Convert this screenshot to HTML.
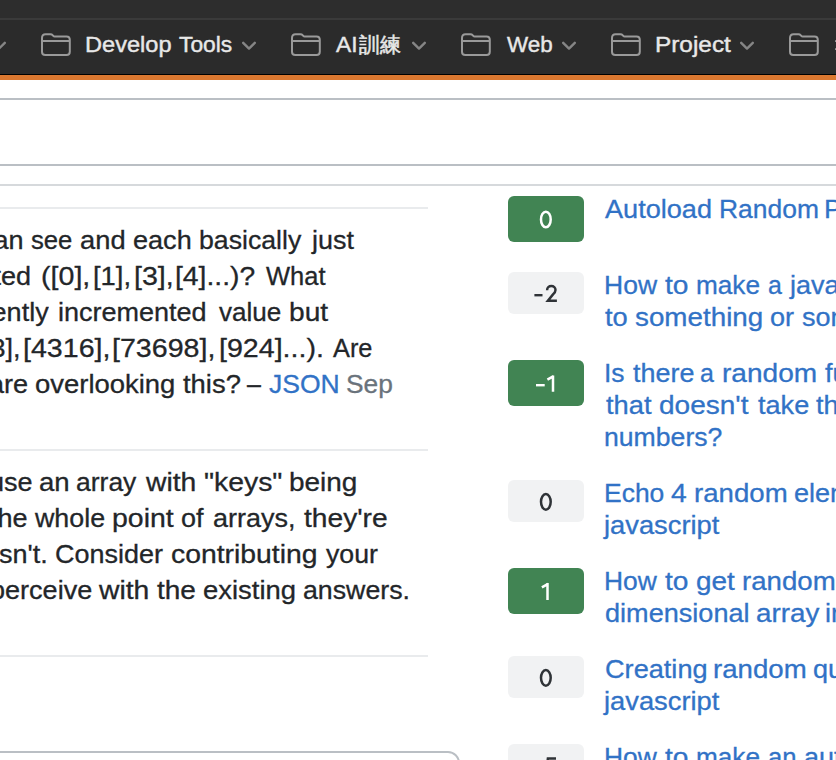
<!DOCTYPE html>
<html><head><meta charset="utf-8">
<style>
html,body{margin:0;padding:0;}
body{width:836px;height:760px;overflow:hidden;position:relative;background:#fff;font-family:"Liberation Sans",sans-serif;}
.a{position:absolute;}
.bar{left:0;top:0;width:836px;height:74px;background:#2b2b2b;}
.bar .tp{left:0;top:0;width:836px;height:18px;background:#2d2d2d;}
.bar .ln{left:0;top:18px;width:836px;height:2px;background:#3a3a3a;}
.blk{left:0;top:74px;width:836px;height:1px;background:#000;}
.org{left:0;top:75px;width:836px;height:5px;background:#db7830;}
.bw{position:absolute;color:#e8e8e8;font-size:22px;line-height:26px;white-space:nowrap;transform-origin:0 0;-webkit-text-stroke:0.4px #e8e8e8;}
.cjk{position:absolute;color:#e8e8e8;font-size:21px;line-height:26px;white-space:nowrap;-webkit-text-stroke:0.5px #e8e8e8;}
.fold{top:32px;}
.chev{top:40px;}
.hr{left:0;width:836px;height:2px;background:#babfc4;}
.ct{color:#232629;font-size:26px;line-height:36px;white-space:nowrap;left:0;}
.sep{left:0;width:428px;height:2px;background:#e9ebed;}
.badge{left:508px;width:76px;border-radius:6px;font-size:24px;text-align:center;}
.g{background:#418453;color:#fff;height:46px;line-height:48px;}
.y{background:#f1f2f3;color:#3b4045;height:42px;line-height:44px;}
.w{position:absolute;font-size:26px;line-height:36px;white-space:nowrap;transform-origin:0 0;-webkit-text-stroke:0.3px currentColor;}
.lk{left:605px;color:#3172c6;font-size:26px;line-height:32px;white-space:nowrap;}
</style></head><body>
<div class="a bar"><div class="a tp"></div><div class="a ln"></div></div>
<div class="a blk"></div>
<div class="a org"></div>

<!-- chevrons -->
<svg class="a chev" style="left:-8px" width="16" height="12"><path d="M1.2 2.8 L7 8.6 L12.8 2.8" fill="none" stroke="#858585" stroke-width="2.4" stroke-linecap="round" stroke-linejoin="round"/></svg>
<svg class="a chev" style="left:242px" width="16" height="12"><path d="M1.2 2.8 L7 8.6 L12.8 2.8" fill="none" stroke="#858585" stroke-width="2.4" stroke-linecap="round" stroke-linejoin="round"/></svg>
<svg class="a chev" style="left:412px" width="16" height="12"><path d="M1.2 2.8 L7 8.6 L12.8 2.8" fill="none" stroke="#858585" stroke-width="2.4" stroke-linecap="round" stroke-linejoin="round"/></svg>
<svg class="a chev" style="left:562px" width="16" height="12"><path d="M1.2 2.8 L7 8.6 L12.8 2.8" fill="none" stroke="#858585" stroke-width="2.4" stroke-linecap="round" stroke-linejoin="round"/></svg>
<svg class="a chev" style="left:740px" width="16" height="12"><path d="M1.2 2.8 L7 8.6 L12.8 2.8" fill="none" stroke="#858585" stroke-width="2.4" stroke-linecap="round" stroke-linejoin="round"/></svg>

<svg class="a fold" style="left:41px" width="31" height="26" viewBox="0 0 31 26"><path d="M1 6 Q1 2.2 4.5 2.2 H9.5 Q10.8 2.2 11.6 3.2 L12.4 4 Q12.8 4.5 13.6 4.5 H25.5 Q28.8 4.5 28.8 7.8 V19.7 Q28.8 23 25.5 23 H4.3 Q1 23 1 19.7 Z M1 9 H28.8" fill="none" stroke="#9a9a9a" stroke-width="2"/></svg>

<svg class="a fold" style="left:291px" width="31" height="26" viewBox="0 0 31 26"><path d="M1 6 Q1 2.2 4.5 2.2 H9.5 Q10.8 2.2 11.6 3.2 L12.4 4 Q12.8 4.5 13.6 4.5 H25.5 Q28.8 4.5 28.8 7.8 V19.7 Q28.8 23 25.5 23 H4.3 Q1 23 1 19.7 Z M1 9 H28.8" fill="none" stroke="#9a9a9a" stroke-width="2"/></svg>

<svg class="a fold" style="left:461px" width="31" height="26" viewBox="0 0 31 26"><path d="M1 6 Q1 2.2 4.5 2.2 H9.5 Q10.8 2.2 11.6 3.2 L12.4 4 Q12.8 4.5 13.6 4.5 H25.5 Q28.8 4.5 28.8 7.8 V19.7 Q28.8 23 25.5 23 H4.3 Q1 23 1 19.7 Z M1 9 H28.8" fill="none" stroke="#9a9a9a" stroke-width="2"/></svg>

<svg class="a fold" style="left:611px" width="31" height="26" viewBox="0 0 31 26"><path d="M1 6 Q1 2.2 4.5 2.2 H9.5 Q10.8 2.2 11.6 3.2 L12.4 4 Q12.8 4.5 13.6 4.5 H25.5 Q28.8 4.5 28.8 7.8 V19.7 Q28.8 23 25.5 23 H4.3 Q1 23 1 19.7 Z M1 9 H28.8" fill="none" stroke="#9a9a9a" stroke-width="2"/></svg>

<svg class="a fold" style="left:789px" width="31" height="26" viewBox="0 0 31 26"><path d="M1 6 Q1 2.2 4.5 2.2 H9.5 Q10.8 2.2 11.6 3.2 L12.4 4 Q12.8 4.5 13.6 4.5 H25.5 Q28.8 4.5 28.8 7.8 V19.7 Q28.8 23 25.5 23 H4.3 Q1 23 1 19.7 Z M1 9 H28.8" fill="none" stroke="#9a9a9a" stroke-width="2"/></svg>

<div class="a" style="left:834.6px;top:40px;width:1.4px;height:2.2px;background:#9a9a9a;border-radius:1px"></div>
<div class="a" style="left:834.6px;top:47.8px;width:1.4px;height:2.2px;background:#9a9a9a;border-radius:1px"></div>
<!-- page -->
<div class="a hr" style="top:98px"></div>
<div class="a hr" style="top:164px"></div>
<div class="a hr" style="top:184px;background:#d6d9dc"></div>
<div class="a sep" style="top:207px"></div>


<div class="a sep" style="top:449px"></div>


<div class="a sep" style="top:655px"></div>

<div class="a" style="left:-20px;top:751px;width:476px;height:40px;border:2px solid #babfc4;border-radius:12px;"></div>

<!-- sidebar -->
<div class="a badge g" style="top:196px"><svg width="76" height="46" viewBox="0 0 76 46" style="position:absolute;left:0;top:0"><g fill="none" stroke="#fff" stroke-width="2.5"><ellipse cx="37.85" cy="23.45" rx="4.85" ry="7.8"/></g></svg></div>
<div class="a badge y" style="top:272px"><svg width="76" height="42" viewBox="0 0 76 42" style="position:absolute;left:0;top:0"><g fill="none" stroke="#2f3337" stroke-width="2.5"><rect x="26.4" y="22.0" width="8.1" height="2.4" fill="#2f3337" stroke="none"/><path d="M39.1 18.2 C39.1 15.6 41 14.1 43.3 14.1 C45.7 14.1 47.5 15.7 47.5 17.9 C47.5 19.6 46.6 20.8 45 22.4 L39.9 28.75 H48.9"/></g></svg></div>
<div class="a badge g" style="top:360px"><svg width="76" height="46" viewBox="0 0 76 46" style="position:absolute;left:0;top:0"><g fill="none" stroke="#fff" stroke-width="2.5"><rect x="28" y="24.0" width="8.7" height="2.4" fill="#fff" stroke="none"/><path d="M45 31.8 V15.4 M45.6 16.1 L39.4 19.7"/></g></svg></div>
<div class="a badge y" style="top:480px"><svg width="76" height="42" viewBox="0 0 76 42" style="position:absolute;left:0;top:0"><g fill="none" stroke="#2f3337" stroke-width="2.5"><ellipse cx="37.85" cy="21.85" rx="4.85" ry="7.8"/></g></svg></div>
<div class="a badge g" style="top:568px"><svg width="76" height="46" viewBox="0 0 76 46" style="position:absolute;left:0;top:0"><g fill="none" stroke="#fff" stroke-width="2.5"><path d="M39.5 32.1 V15.100000000000001 M40.1 15.8 L33.9 19.4"/></g></svg></div>
<div class="a badge y" style="top:656px"><svg width="76" height="42" viewBox="0 0 76 42" style="position:absolute;left:0;top:0"><g fill="none" stroke="#2f3337" stroke-width="2.5"><ellipse cx="37.85" cy="21.85" rx="4.85" ry="7.8"/></g></svg></div>
<div class="a badge y" style="top:744px"><svg width="76" height="42" viewBox="0 0 76 42" style="position:absolute;left:0;top:0"><g fill="none" stroke="#2f3337" stroke-width="2.5"><rect x="26.4" y="22.0" width="8.1" height="2.4" fill="#2f3337" stroke="none"/><path d="M48 14.5 H39.9 L39.1 22 C40.1 21 41.4 20.5 43 20.5 C45.8 20.5 47.9 22.6 47.9 25.3 C47.9 28.2 45.8 30.2 43 30.2 C40.8 30.2 39.1 29 38.6 27.2"/></g></svg></div>
<div class="cjk" style="left:359px;top:31.5px">訓練</div>
<div class="bw" style="left:85.16px;top:32.38px;transform:scaleX(1.0718)">Develop</div>
<div class="bw" style="left:178.90px;top:32.38px;transform:scaleX(1.0373)">Tools</div>
<div class="bw" style="left:336.00px;top:32.38px;transform:scaleX(1.0368)">AI</div>
<div class="bw" style="left:507.20px;top:32.38px;transform:scaleX(1.0182)">Web</div>
<div class="bw" style="left:654.98px;top:32.38px;transform:scaleX(1.1076)">Project</div>
<div class="w" style="left:-19.60px;top:221.69px;transform:scaleX(1.0400);color:#232629">can</div>
<div class="w" style="left:31.31px;top:221.69px;transform:scaleX(0.9875);color:#232629">see</div>
<div class="w" style="left:80.25px;top:221.69px;transform:scaleX(1.0512);color:#232629">and</div>
<div class="w" style="left:132.96px;top:221.69px;transform:scaleX(1.0407);color:#232629">each</div>
<div class="w" style="left:199.15px;top:221.69px;transform:scaleX(1.0255);color:#232629">basically</div>
<div class="w" style="left:311.54px;top:221.69px;transform:scaleX(1.0366);color:#232629">just</div>
<div class="w" style="left:-44.24px;top:257.69px;transform:scaleX(1.0400);color:#232629">sorted</div>
<div class="w" style="left:40.80px;top:257.69px;transform:scaleX(1.1000);color:#232629">([0],</div>
<div class="w" style="left:93.19px;top:257.69px;transform:scaleX(1.0531);color:#232629">[1],</div>
<div class="w" style="left:133.95px;top:257.69px;transform:scaleX(1.1000);color:#232629">[3],</div>
<div class="w" style="left:175.43px;top:257.69px;transform:scaleX(1.0873);color:#232629">[4]...)?</div>
<div class="w" style="left:265.80px;top:257.69px;transform:scaleX(0.9803);color:#232629">What</div>
<div class="w" style="left:-55.00px;top:293.69px;transform:scaleX(1.0400);color:#232629">currently</div>
<div class="w" style="left:57.72px;top:293.69px;transform:scaleX(1.0388);color:#232629">incremented</div>
<div class="w" style="left:218.80px;top:293.69px;transform:scaleX(1.0033);color:#232629">value</div>
<div class="w" style="left:289.14px;top:293.69px;transform:scaleX(1.0824);color:#232629">but</div>
<div class="w" style="left:-17.36px;top:329.69px;transform:scaleX(1.0400);color:#232629">[3],</div>
<div class="w" style="left:22.75px;top:329.69px;transform:scaleX(1.1000);color:#232629">[4316],</div>
<div class="w" style="left:111.75px;top:329.69px;transform:scaleX(1.1000);color:#232629">[73698],</div>
<div class="w" style="left:218.90px;top:329.69px;transform:scaleX(1.1000);color:#232629">[924]...).</div>
<div class="w" style="left:333.30px;top:329.69px;transform:scaleX(0.9750);color:#232629">Are</div>
<div class="w" style="left:-11.48px;top:365.69px;transform:scaleX(1.0400);color:#232629">are</div>
<div class="w" style="left:35.34px;top:365.69px;transform:scaleX(1.0554);color:#232629">overlooking</div>
<div class="w" style="left:183.40px;top:365.69px;transform:scaleX(1.0537);color:#232629">this?</div>
<div class="w" style="left:247.40px;top:365.69px;transform:scaleX(0.9600);color:#232629">–</div>
<div class="w" style="left:269.38px;top:365.69px;transform:scaleX(1.0197);color:#3172c6">JSON</div>
<div class="w" style="left:345.99px;top:365.69px;transform:scaleX(1.0114);color:#6a737c">Sep</div>
<div class="w" style="left:-11.24px;top:464.49px;transform:scaleX(1.0400);color:#232629">use</div>
<div class="w" style="left:39.14px;top:464.49px;transform:scaleX(1.0615);color:#232629">an</div>
<div class="w" style="left:75.58px;top:464.49px;transform:scaleX(1.0190);color:#232629">array</div>
<div class="w" style="left:145.70px;top:464.49px;transform:scaleX(1.0889);color:#232629">with</div>
<div class="w" style="left:204.21px;top:464.49px;transform:scaleX(1.0900);color:#232629">"keys"</div>
<div class="w" style="left:288.65px;top:464.49px;transform:scaleX(1.0750);color:#232629">being</div>
<div class="w" style="left:-10.00px;top:500.49px;transform:scaleX(1.0400);color:#232629">the</div>
<div class="w" style="left:35.20px;top:500.49px;transform:scaleX(1.0313);color:#232629">whole</div>
<div class="w" style="left:112.11px;top:500.49px;transform:scaleX(1.0944);color:#232629">point</div>
<div class="w" style="left:181.16px;top:500.49px;transform:scaleX(1.0381);color:#232629">of</div>
<div class="w" style="left:213.46px;top:500.49px;transform:scaleX(1.0382);color:#232629">arrays,</div>
<div class="w" style="left:304.00px;top:500.49px;transform:scaleX(1.0829);color:#232629">they're</div>
<div class="w" style="left:-6.54px;top:536.49px;transform:scaleX(1.0400);color:#232629">isn't.</div>
<div class="w" style="left:55.46px;top:536.49px;transform:scaleX(1.0369);color:#232629">Consider</div>
<div class="w" style="left:170.91px;top:536.49px;transform:scaleX(1.0894);color:#232629">contributing</div>
<div class="w" style="left:326.30px;top:536.49px;transform:scaleX(1.0260);color:#232629">your</div>
<div class="w" style="left:-10.38px;top:572.49px;transform:scaleX(1.0400);color:#232629">perceive</div>
<div class="w" style="left:99.20px;top:572.49px;transform:scaleX(1.0889);color:#232629">with</div>
<div class="w" style="left:157.00px;top:572.49px;transform:scaleX(1.0771);color:#232629">the</div>
<div class="w" style="left:202.95px;top:572.49px;transform:scaleX(1.0547);color:#232629">existing</div>
<div class="w" style="left:302.97px;top:572.49px;transform:scaleX(1.0287);color:#232629">answers.</div>
<div class="w" style="left:604.80px;top:190.99px;transform:scaleX(1.0426);color:#3172c6">Autoload</div>
<div class="w" style="left:718.77px;top:190.99px;transform:scaleX(1.0168);color:#3172c6">Random</div>
<div class="w" style="left:823.82px;top:190.99px;transform:scaleX(1.0400);color:#3172c6">Posts</div>
<div class="w" style="left:603.66px;top:266.99px;transform:scaleX(1.0200);color:#3172c6">How</div>
<div class="w" style="left:664.90px;top:266.99px;transform:scaleX(1.0810);color:#3172c6">to</div>
<div class="w" style="left:695.59px;top:266.99px;transform:scaleX(1.0066);color:#3172c6">make</div>
<div class="w" style="left:767.52px;top:266.99px;transform:scaleX(0.9600);color:#3172c6">a</div>
<div class="w" style="left:790.04px;top:266.99px;transform:scaleX(1.0400);color:#3172c6">javascript</div>
<div class="w" style="left:605.30px;top:298.99px;transform:scaleX(1.0476);color:#3172c6">to</div>
<div class="w" style="left:634.83px;top:298.99px;transform:scaleX(1.0692);color:#3172c6">something</div>
<div class="w" style="left:770.26px;top:298.99px;transform:scaleX(1.0409);color:#3172c6">or</div>
<div class="w" style="left:801.66px;top:298.99px;transform:scaleX(1.0400);color:#3172c6">some</div>
<div class="w" style="left:603.86px;top:354.99px;transform:scaleX(1.0176);color:#3172c6">Is</div>
<div class="w" style="left:632.50px;top:354.99px;transform:scaleX(1.0362);color:#3172c6">there</div>
<div class="w" style="left:700.27px;top:354.99px;transform:scaleX(0.9600);color:#3172c6">a</div>
<div class="w" style="left:722.04px;top:354.99px;transform:scaleX(1.0800);color:#3172c6">random</div>
<div class="w" style="left:824.50px;top:354.99px;transform:scaleX(1.0400);color:#3172c6">function</div>
<div class="w" style="left:605.70px;top:386.99px;transform:scaleX(1.0488);color:#3172c6">that</div>
<div class="w" style="left:658.82px;top:386.99px;transform:scaleX(1.0768);color:#3172c6">doesn't</div>
<div class="w" style="left:757.50px;top:386.99px;transform:scaleX(1.0417);color:#3172c6">take</div>
<div class="w" style="left:816.00px;top:386.99px;transform:scaleX(1.0400);color:#3172c6">the</div>
<div class="w" style="left:603.65px;top:418.99px;transform:scaleX(1.0239);color:#3172c6">numbers?</div>
<div class="w" style="left:603.66px;top:474.99px;transform:scaleX(1.0179);color:#3172c6">Echo</div>
<div class="w" style="left:670.92px;top:474.99px;transform:scaleX(1.0846);color:#3172c6">4</div>
<div class="w" style="left:693.88px;top:474.99px;transform:scaleX(1.0624);color:#3172c6">random</div>
<div class="w" style="left:793.76px;top:474.99px;transform:scaleX(1.0400);color:#3172c6">elements</div>
<div class="w" style="left:604.45px;top:506.99px;transform:scaleX(1.0505);color:#3172c6">javascript</div>
<div class="w" style="left:603.87px;top:562.99px;transform:scaleX(1.0160);color:#3172c6">How</div>
<div class="w" style="left:664.90px;top:562.99px;transform:scaleX(1.0810);color:#3172c6">to</div>
<div class="w" style="left:696.33px;top:562.99px;transform:scaleX(1.0743);color:#3172c6">get</div>
<div class="w" style="left:741.88px;top:562.99px;transform:scaleX(1.0624);color:#3172c6">random</div>
<div class="w" style="left:604.66px;top:594.99px;transform:scaleX(1.0419);color:#3172c6">dimensional</div>
<div class="w" style="left:755.63px;top:594.99px;transform:scaleX(1.0707);color:#3172c6">array</div>
<div class="w" style="left:825.22px;top:594.99px;transform:scaleX(1.0400);color:#3172c6">in</div>
<div class="w" style="left:604.66px;top:650.99px;transform:scaleX(1.0437);color:#3172c6">Creating</div>
<div class="w" style="left:713.08px;top:650.99px;transform:scaleX(1.0624);color:#3172c6">random</div>
<div class="w" style="left:812.96px;top:650.99px;transform:scaleX(1.0400);color:#3172c6">questions</div>
<div class="w" style="left:604.45px;top:682.99px;transform:scaleX(1.0505);color:#3172c6">javascript</div>
<div class="w" style="left:603.87px;top:738.99px;transform:scaleX(1.0160);color:#3172c6">How</div>
<div class="w" style="left:664.90px;top:738.99px;transform:scaleX(1.0810);color:#3172c6">to</div>
<div class="w" style="left:695.59px;top:738.99px;transform:scaleX(1.0066);color:#3172c6">make</div>
<div class="w" style="left:768.11px;top:738.99px;transform:scaleX(0.9885);color:#3172c6">an</div>
<div class="w" style="left:803.66px;top:738.99px;transform:scaleX(1.0400);color:#3172c6">auto</div>
</body></html>
